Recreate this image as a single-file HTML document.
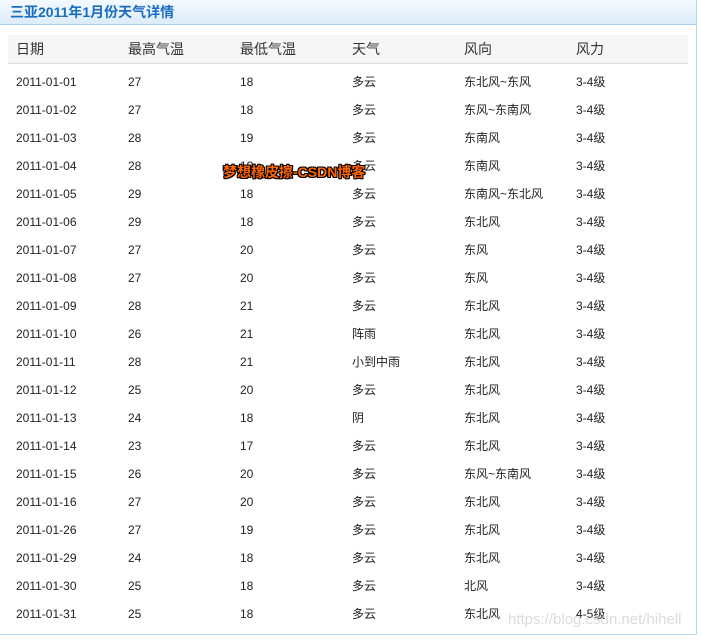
<!DOCTYPE html><html><head><meta charset="utf-8"><style>
body{margin:0;background:#fff;width:701px;height:640px;overflow:hidden;font-family:"Liberation Sans","Noto Sans CJK SC",sans-serif;position:relative}
.box{position:absolute;left:0;top:0;width:696px;height:634px;border-right:1px solid #b9d8ef;border-bottom:1px solid #b9d8ef}
.hd{height:24px;border-bottom:1px solid #a9cfee;background:linear-gradient(#f4fafe,#dcecf9);color:#1a6cc0;font-weight:bold;font-size:14px;line-height:24px;padding-left:10px}
.th{position:absolute;left:8px;top:35px;width:680px;height:28px;background:#f6f6f6;border-bottom:1px solid #ddd}
.c{position:absolute;font-size:12px;line-height:16px;height:16px;color:#222;white-space:nowrap}
.h{font-size:14px;line-height:18px;height:18px;color:#333}
.wm{position:absolute;left:223px;top:163px;font-size:14px;line-height:18px;font-weight:bold;color:#f60;text-shadow:1px 1px 0 #000,-1px -1px 0 #000,1px -1px 0 #000,-1px 1px 0 #000,0 1px 0 #000,1px 0 0 #000,0 -1px 0 #000,-1px 0 0 #000}
.wm2{position:absolute;left:508px;top:611px;font-size:15px;line-height:18px;color:rgba(205,205,205,.7)}
</style></head><body><div class="box"><div class="hd">三亚2011年1月份天气详情</div><div class="th"></div></div>
<div id="t"></div>
<script>
var xs=[16,128,240,352,464,576];
var H=["日期","最高气温","最低气温","天气","风向","风力"];
var R=[["01","27","18","多云","东北风~东风","3-4级"],["02","27","18","多云","东风~东南风","3-4级"],["03","28","19","多云","东南风","3-4级"],["04","28","19","多云","东南风","3-4级"],["05","29","18","多云","东南风~东北风","3-4级"],["06","29","18","多云","东北风","3-4级"],["07","27","20","多云","东风","3-4级"],["08","27","20","多云","东风","3-4级"],["09","28","21","多云","东北风","3-4级"],["10","26","21","阵雨","东北风","3-4级"],["11","28","21","小到中雨","东北风","3-4级"],["12","25","20","多云","东北风","3-4级"],["13","24","18","阴","东北风","3-4级"],["14","23","17","多云","东北风","3-4级"],["15","26","20","多云","东风~东南风","3-4级"],["16","27","20","多云","东北风","3-4级"],["26","27","19","多云","东北风","3-4级"],["29","24","18","多云","东北风","3-4级"],["30","25","18","多云","北风","3-4级"],["31","25","18","多云","东北风","4-5级"]];
var s="";
H.forEach(function(h,i){s+='<div class="c h" style="left:'+xs[i]+'px;top:40px">'+h+'</div>';});
R.forEach(function(r,j){r[0]="2011-01-"+r[0];r.forEach(function(v,i){s+='<div class="c" style="left:'+xs[i]+'px;top:'+(74+28*j)+'px">'+v+'</div>';});});
document.getElementById("t").innerHTML=s;
</script>
<div class="wm">梦想橡皮擦-CSDN博客</div>
<div class="wm2">https://blog.csdn.net/hihell</div>
</body></html>
